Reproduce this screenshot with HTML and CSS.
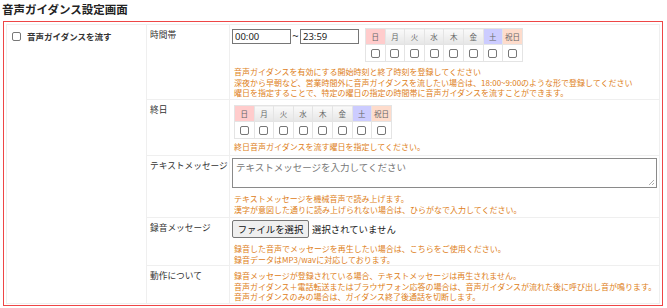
FILE: index.html
```html
<!DOCTYPE html>
<html lang="ja">
<head>
<meta charset="utf-8">
<link rel="stylesheet" href="styles.css">
</head>
<body>
<h1 class="title">音声ガイダンス設定画面</h1>
<div class="box">
  <table class="settings">
    <tr class="r1">
      <td class="c1" rowspan="5">
        <label class="main-check"><span class="cb"></span><span class="main-label">音声ガイダンスを流す</span></label>
      </td>
      <td class="c2">時間帯</td>
      <td class="c3">
        <div class="time-row">
          <span class="tinput">00:00</span><span class="tilde">~</span><span class="tinput">23:59</span>
          <table class="days">
            <tr><th class="sun">日</th><th>月</th><th>火</th><th>水</th><th>木</th><th>金</th><th class="sat">土</th><th class="hol">祝日</th></tr>
            <tr><td><span class="cb"></span></td><td><span class="cb"></span></td><td><span class="cb"></span></td><td><span class="cb"></span></td><td><span class="cb"></span></td><td><span class="cb"></span></td><td><span class="cb"></span></td><td><span class="cb"></span></td></tr>
          </table>
        </div>
        <p class="note n1">音声ガイダンスを有効にする開始時刻と終了時刻を登録してください<br>深夜から早朝など、営業時間外に音声ガイダンスを流したい場合は、18:00~9:00のような形で登録してください<br>曜日を指定することで、特定の曜日の指定の時間帯に音声ガイダンスを流すことができます。</p>
      </td>
    </tr>
    <tr class="r2">
      <td class="c2">終日</td>
      <td class="c3">
        <table class="days solo">
          <tr><th class="sun">日</th><th>月</th><th>火</th><th>水</th><th>木</th><th>金</th><th class="sat">土</th><th class="hol">祝日</th></tr>
          <tr><td><span class="cb"></span></td><td><span class="cb"></span></td><td><span class="cb"></span></td><td><span class="cb"></span></td><td><span class="cb"></span></td><td><span class="cb"></span></td><td><span class="cb"></span></td><td><span class="cb"></span></td></tr>
        </table>
        <p class="note n2">終日音声ガイダンスを流す曜日を指定してください。</p>
      </td>
    </tr>
    <tr class="r3">
      <td class="c2">テキストメッセージ</td>
      <td class="c3">
        <div class="textarea"><span class="ph">テキストメッセージを入力してください</span>
          <svg class="grip" width="7" height="7" viewBox="0 0 7 7"><path d="M6 1 L1 6 M6 4 L4 6" stroke="#999" stroke-width="0.8" fill="none"/></svg>
        </div>
        <p class="note n3">テキストメッセージを機械音声で読み上げます。<br>漢字が意図した通りに読み上げられない場合は、ひらがなで入力してください。</p>
      </td>
    </tr>
    <tr class="r4">
      <td class="c2">録音メッセージ</td>
      <td class="c3">
        <div class="file-row"><span class="file-btn">ファイルを選択</span><span class="file-none">選択されていません</span></div>
        <p class="note n4">録音した音声でメッセージを再生したい場合は、こちらをご使用ください。<br>録音データはMP3/wavに対応しております。</p>
      </td>
    </tr>
    <tr class="r5">
      <td class="c2">動作について</td>
      <td class="c3">
        <p class="note n5">録音メッセージが登録されている場合、テキストメッセージは再生されません。<br>音声ガイダンス＋電話転送またはブラウザフォン応答の場合は、音声ガイダンスが流れた後に呼び出し音が鳴ります。<br>音声ガイダンスのみの場合は、ガイダンス終了後通話を切断します。</p>
      </td>
    </tr>
  </table>
</div>
</body>
</html>
```

FILE: styles.css
```css
* { box-sizing: border-box; }
html, body { margin: 0; padding: 0; background: #fff; }
body {
  font-family: "Noto Sans CJK JP", "Noto Sans", sans-serif;
  color: #222;
  width: 667px;
  height: 308px;
  overflow: hidden;
}
.title {
  margin: 0 0 5px 0;
  padding: 2px 0 0 2px;
  font-size: 11.5px;
  line-height: 14px;
  font-weight: bold;
  color: #222;
}
.box {
  margin-left: 3px;
  width: 660px;
  height: 285px;
  border: 1px solid #ee4646;
  padding: 2px;
}
.settings {
  border-collapse: collapse;
  width: 100%;
  border: 1px solid #efefef;
}
.settings > tbody > tr > td {
  border: 1px solid #efefef;
  vertical-align: top;
  padding: 0;
}
.c1 { width: 143px; padding: 6px 0 0 5px !important; }
.c2 {
  width: 83px;
  font-size: 8.7px;
  line-height: 11px;
  color: #333;
  padding: 4px 0 0 3px !important;
  white-space: nowrap;
}
.c3 { padding: 0 2px 0 2px !important; }
.r1 > td { height: 75px; }
.r2 > td { height: 56px; }
.r3 > td { height: 62px; }
.r4 > td { height: 47px; }
.r5 > td { height: 38px; }

.main-check { display: flex; align-items: center; gap: 6px; }
.main-label { font-size: 8.5px; font-weight: bold; color: #333; line-height: 11px; }

.cb {
  display: inline-block;
  width: 9px;
  height: 9px;
  border: 1px solid #777;
  border-radius: 2px;
  background: #fff;
  vertical-align: middle;
}

.r1 .c3 { padding-top: 3px !important; }
.time-row { display: flex; align-items: flex-start; }
.tinput {
  display: block;
  margin-top: 1px;
  width: 59px;
  height: 15px;
  border: 1px solid #767676;
  font-size: 9.5px;
  line-height: 13px;
  padding-left: 2px;
  color: #222;
  font-family: "Noto Sans", sans-serif;
}
.tilde {
  width: 9px;
  margin-top: 1px;
  font-size: 11px;
  line-height: 13px;
  text-align: center;
  color: #333;
  font-family: "Noto Sans", sans-serif;
}
.days {
  border-collapse: collapse;
  margin-left: 6px;
}
.days.solo { margin: 5px 0 0 2px; }
.days th, .days td {
  border: 1px solid #e4e4e4;
  width: 19.6px;
  padding: 0;
  text-align: center;
}
.days th {
  height: 16px;
  font-size: 7.5px;
  font-weight: normal;
  color: #666;
  background: linear-gradient(#fafafa, #e6e6e6);
}
.days th.sun { background: #ffcccc; }
.days th.sat { background: #ccccff; }
.days th.hol { background: #fedccc; }
.days td { height: 17px; background: #fff; }
.days td .cb { display: block; margin: 0 auto; }

.note {
  margin: 0;
  padding-left: 2px;
  font-size: 8px;
  line-height: 10.5px;
  color: #de8020;
  white-space: nowrap;
}
.n1 { margin-top: 5px; }
.n2 { margin-top: 3px; }
.n3 { margin-top: 6px; }
.n4 { margin-top: 6px; }
.n5 { margin-top: 5px; }

.r3 .c3 { padding-top: 2px !important; }
.textarea {
  position: relative;
  width: 425px;
  height: 30px;
  border: 1px solid #8a8a8a;
  padding: 2px 3px;
  font-size: 9.5px;
  line-height: 12px;
}
.ph { display: block; font-size: 9.5px; line-height: 12px; color: #777; }
.grip { position: absolute; right: 1px; bottom: 1px; }

.r4 .c3 { padding-top: 2px !important; }
.file-row { display: flex; align-items: center; }
.file-btn {
  display: inline-block;
  height: 18px;
  width: 77px;
  border: 1px solid #767676;
  border-radius: 2px;
  background: #efefef;
  font-size: 9.4px;
  line-height: 16px;
  text-align: center;
  color: #111;
}
.file-none { margin-left: 3px; font-size: 9.4px; line-height: 16px; color: #222; }
```
